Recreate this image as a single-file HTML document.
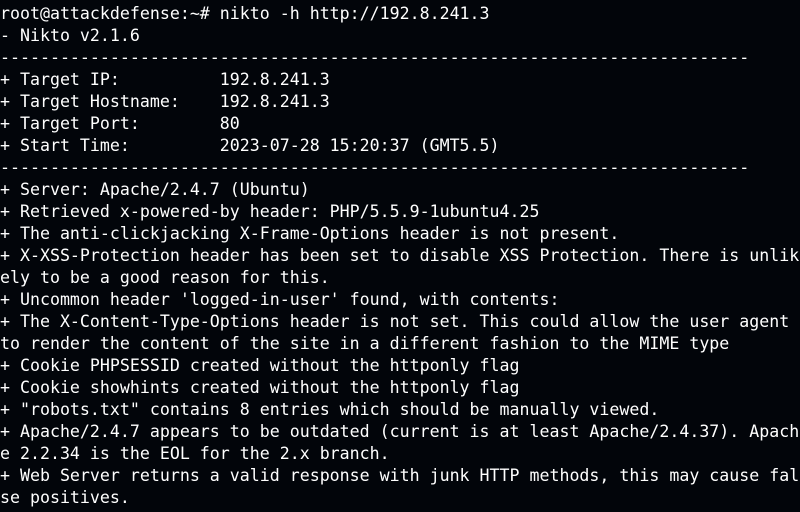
<!DOCTYPE html>
<html><head><meta charset="utf-8"><style>
html,body{margin:0;padding:0;background:#02050a;width:800px;height:512px;overflow:hidden}
pre{margin:0;padding:3px 0 0 0;color:#fff;font-family:"DejaVu Sans Mono","Liberation Mono",monospace;font-size:16.6px;line-height:22px;white-space:pre}
</style></head><body><pre>root@attackdefense:~# nikto -h http://192.8.241.3
- Nikto v2.1.6
---------------------------------------------------------------------------
+ Target IP:          192.8.241.3
+ Target Hostname:    192.8.241.3
+ Target Port:        80
+ Start Time:         2023-07-28 15:20:37 (GMT5.5)
---------------------------------------------------------------------------
+ Server: Apache/2.4.7 (Ubuntu)
+ Retrieved x-powered-by header: PHP/5.5.9-1ubuntu4.25
+ The anti-clickjacking X-Frame-Options header is not present.
+ X-XSS-Protection header has been set to disable XSS Protection. There is unlik
ely to be a good reason for this.
+ Uncommon header 'logged-in-user' found, with contents:
+ The X-Content-Type-Options header is not set. This could allow the user agent
to render the content of the site in a different fashion to the MIME type
+ Cookie PHPSESSID created without the httponly flag
+ Cookie showhints created without the httponly flag
+ "robots.txt" contains 8 entries which should be manually viewed.
+ Apache/2.4.7 appears to be outdated (current is at least Apache/2.4.37). Apach
e 2.2.34 is the EOL for the 2.x branch.
+ Web Server returns a valid response with junk HTTP methods, this may cause fal
se positives.</pre></body></html>
